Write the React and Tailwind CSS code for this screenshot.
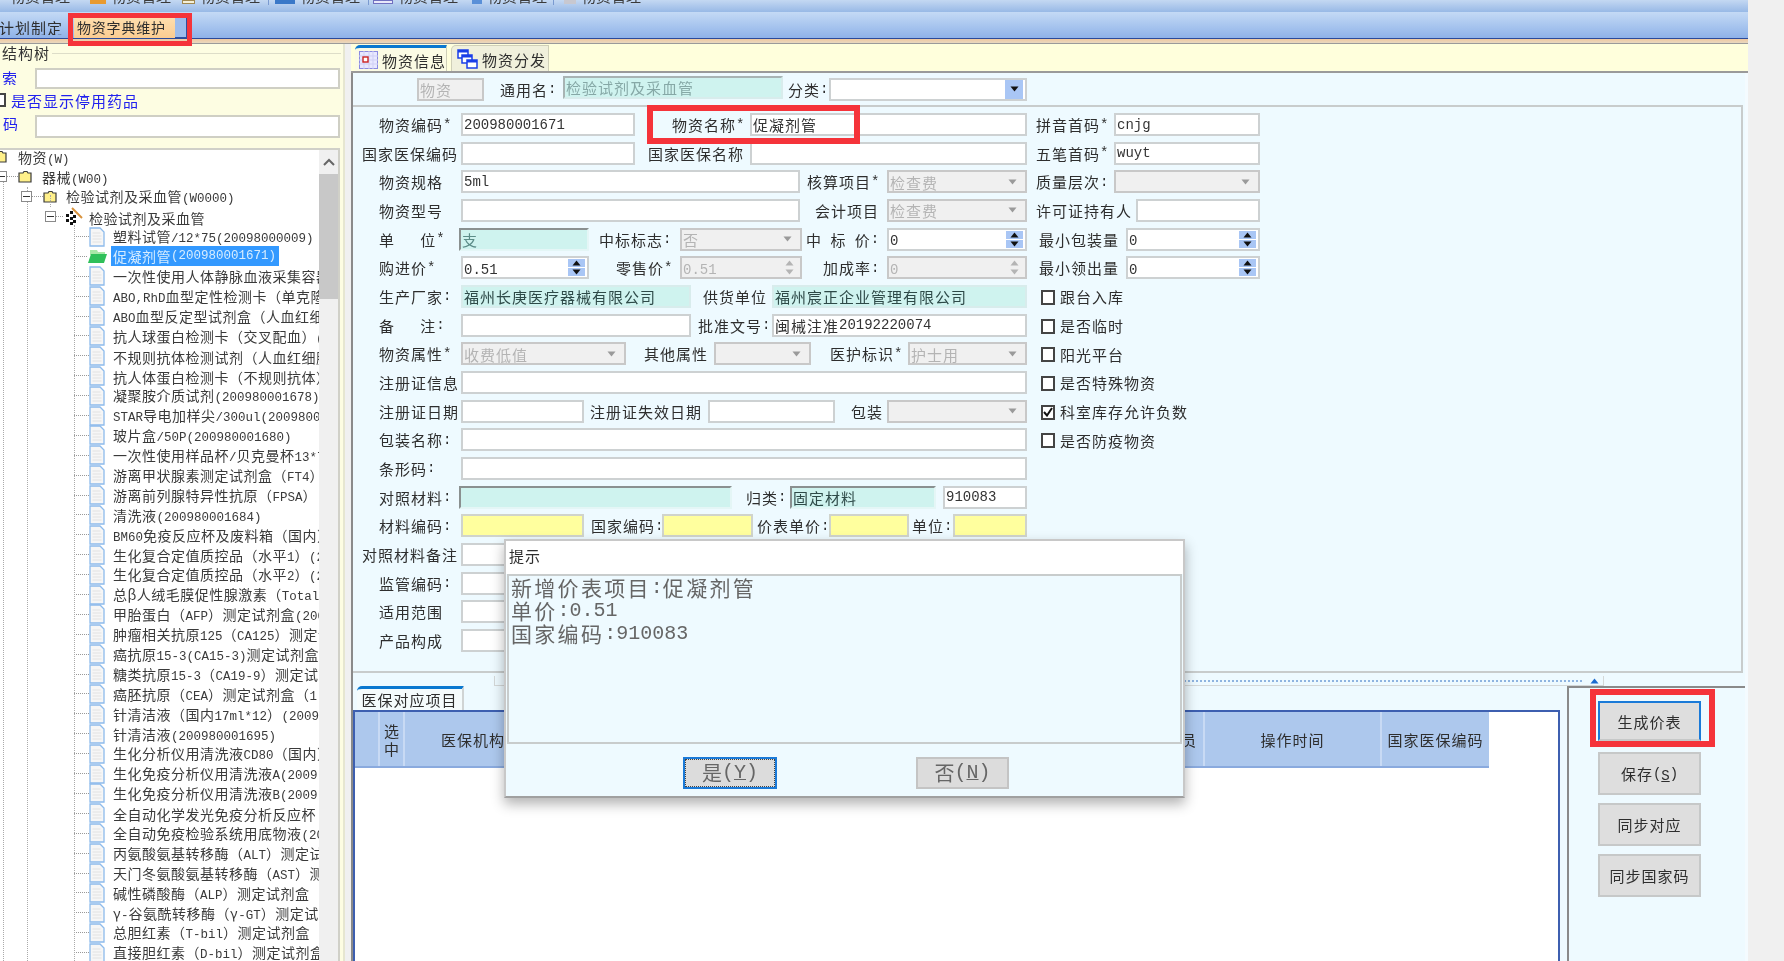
import React from "react";

const VARIANTS = {
  form: ["text-[15px] tracking-[1px]", "font-['Liberation_Mono',monospace] text-[14px]"],
  tree: ["text-[14px] tracking-[0.5px]", "font-['Liberation_Mono',monospace] text-[12.5px]"],
  dlg: ["text-[21px] tracking-[2.3px]", "font-['Liberation_Mono',monospace] text-[20px]"],
  btn: ["text-[20px]", "font-['Liberation_Mono',monospace] text-[20px]"],
};

function T({ t, v = "form" }) {
  const parts = String(t).match(/[\x00-\x7F]+|[^\x00-\x7F]+/g) || [];
  return (
    <>
      {parts.map((p, i) => (
        <span key={i} className={/^[\x00-\x7F]/.test(p) ? VARIANTS[v][1] : VARIANTS[v][0]}>
          {p}
        </span>
      ))}
    </>
  );
}

function L({ c = "", t }) {
  return (
    <div className={`shrink-0 flex items-center whitespace-pre leading-none text-[#2e2e2e] ${c}`}>
      <T t={t} />
    </div>
  );
}

function Inp({ c = "", v = "", k = "white" }) {
  const kinds = {
    white: "bg-white border-2 border-[#cdd1d2] text-[#333]",
    teal: "bg-[#cff3ef] border-2 border-[#d8ecec] text-[#2e4a48]",
    tealD: "bg-[#cff3ef] border-2 border-t-[#8a9090] border-l-[#8a9090] border-r-[#e4f6f6] border-b-[#e4f6f6] text-[#5c8c88]",
    yellow: "bg-[#ffff9e] border-2 border-[#d0d4cc]",
    dis: "bg-[#f0f0f0] border-2 border-[#c8c8c8] text-[#b4b4b4]",
  };
  return (
    <div className={`shrink-0 h-[23px] flex items-center px-[1px] whitespace-pre leading-none overflow-hidden ${kinds[k]} ${c}`}>
      <T t={v} />
    </div>
  );
}

function Tri({ up, c }) {
  return (
    <svg width="9" height="6" viewBox="0 0 9 6" className="block">
      <path d={up ? "M4.5 0.5L8.5 5.5H0.5Z" : "M0.5 0.5H8.5L4.5 5.5Z"} fill={c} />
    </svg>
  );
}

function Sel({ c = "", v = "" }) {
  return (
    <div className={`shrink-0 h-[23px] flex items-center justify-between pl-[1px] pr-[8px] leading-none bg-[#f0f0f0] border-2 border-[#c8c8c8] text-[#b4b4b4] ${c}`}>
      <span className="whitespace-pre"><T t={v} /></span>
      <Tri c="#9a9a9a" />
    </div>
  );
}

function Spin({ c = "", v = "", dis = false }) {
  return (
    <div className={`shrink-0 h-[23px] flex items-center justify-between pl-[1px] pr-[2px] leading-none border-2 ${dis ? "bg-[#f0f0f0] border-[#c8c8c8] text-[#b4b4b4]" : "bg-white border-[#cdd1d2] text-[#333]"} ${c}`}>
      <span><T t={v} /></span>
      <div className="flex flex-col gap-[1px] h-full py-[1px]">
        <div className={`flex-1 w-[17px] flex items-center justify-center ${dis ? "" : "bg-[#a9c6f5]"}`}>
          <Tri up c={dis ? "#b4b4b4" : "#111"} />
        </div>
        <div className={`flex-1 w-[17px] flex items-center justify-center ${dis ? "" : "bg-[#a9c6f5]"}`}>
          <Tri c={dis ? "#b4b4b4" : "#111"} />
        </div>
      </div>
    </div>
  );
}

function Chk({ t, on }) {
  return (
    <div className="shrink-0 flex items-center ml-[14px] leading-none text-[#2e2e2e] whitespace-pre">
      <div className="w-[14px] h-[15px] mt-[2px] border-2 border-[#444] bg-white flex items-center justify-center">
        {on && (
          <svg width="10" height="10" viewBox="0 0 10 10">
            <path d="M1 5l3 3.5L9 1" fill="none" stroke="#111" strokeWidth="2" />
          </svg>
        )}
      </div>
      <span className="ml-[5px]"><T t={t} /></span>
    </div>
  );
}

function Row({ children }) {
  return <div className="flex h-[23px] items-stretch">{children}</div>;
}

function Doc() {
  return (
    <svg width="16" height="20" viewBox="0 0 16 20" className="shrink-0">
      <path d="M1 1h10l4 4v14H1z" fill="#f6f6f6" stroke="#8dbbec" strokeWidth="1.3" />
      <path d="M3.5 6h8M3.5 9h9M3.5 12h9M3.5 15h9" stroke="#e2e2e2" />
    </svg>
  );
}

function Folder() {
  return (
    <svg width="14" height="13" viewBox="0 0 14 13" className="shrink-0">
      <path d="M1 3h4l1-1.5h3L10 3h3v9H1z" fill="#fff08a" stroke="#3a3a3a" strokeWidth="1.2" />
    </svg>
  );
}

function Green() {
  return (
    <svg width="21" height="15" viewBox="0 0 21 15" className="shrink-0">
      <path d="M3 1h7l1 2h7v3H3z" fill="#a8e8a8" />
      <path d="M4 5h16l-3 9H1z" fill="#2fc05a" />
    </svg>
  );
}

function Cat() {
  return (
    <svg width="20" height="20" viewBox="0 0 20 20" className="shrink-0">
      <path d="M9 1l10 10" stroke="#d8923c" strokeWidth="2" />
      <path d="M7 4h3v3H7zM3 7h3v3H3zM10 8h3v3h-3zM7 10h3v3H7zM3 12h3v3H3zM10 13h3v3h-3zM7 15h3v3H7z" fill="#111" />
    </svg>
  );
}

function Plus() {
  return (
    <div className="shrink-0 w-[11px] h-[11px] border border-[#8a8a8a] bg-white flex items-center justify-center">
      <div className="w-[7px] h-[1px] bg-[#333]" />
    </div>
  );
}

function Dots({ c }) {
  return <div className={`shrink-0 border-t border-dotted border-[#999] ${c}`} />;
}

const LEAVES = [
  "塑料试管/12*75(20098000009)",
  "促凝剂管(200980001671)",
  "一次性使用人体静脉血液采集容器(200980001672)",
  "ABO,RhD血型定性检测卡（单克隆抗体）",
  "ABO血型反定型试剂盒（人血红细胞）",
  "抗人球蛋白检测卡（交叉配血）(200980001675)",
  "不规则抗体检测试剂（人血红细胞）",
  "抗人体蛋白检测卡（不规则抗体）",
  "凝聚胺介质试剂(200980001678)",
  "STAR导电加样尖/300ul(200980001679)",
  "玻片盒/50P(200980001680)",
  "一次性使用样品杯/贝克曼杯13*75",
  "游离甲状腺素测定试剂盒（FT4）",
  "游离前列腺特异性抗原（FPSA）(2009",
  "清洗液(200980001684)",
  "BM60免疫反应杯及废料箱（国内）",
  "生化复合定值质控品（水平1）(2009",
  "生化复合定值质控品（水平2）(2009",
  "总β人绒毛膜促性腺激素（Total",
  "甲胎蛋白（AFP）测定试剂盒(2009",
  "肿瘤相关抗原125（CA125）测定试剂盒",
  "癌抗原15-3(CA15-3)测定试剂盒",
  "糖类抗原15-3（CA19-9）测定试剂盒",
  "癌胚抗原（CEA）测定试剂盒（1",
  "针清洁液（国内17ml*12）(2009",
  "针清洁液(200980001695)",
  "生化分析仪用清洗液CD80（国内）",
  "生化免疫分析仪用清洗液A(2009",
  "生化免疫分析仪用清洗液B(2009",
  "全自动化学发光免疫分析反应杯",
  "全自动免疫检验系统用底物液(2009",
  "丙氨酸氨基转移酶（ALT）测定试剂盒",
  "天门冬氨酸氨基转移酶（AST）测定",
  "碱性磷酸酶（ALP）测定试剂盒",
  "γ-谷氨酰转移酶（γ-GT）测定试剂盒",
  "总胆红素（T-bil）测定试剂盒",
  "直接胆红素（D-bil）测定试剂盒",
];

function TreeRow({ children }) {
  return <div className="h-[19.9px] shrink-0 flex items-center whitespace-pre leading-none text-[#3a3a3a]">{children}</div>;
}

function Tree() {
  return (
    <div className="relative w-[319px] h-full overflow-hidden">
      <div className="absolute left-[3px] top-[25px] bottom-0 border-l border-dotted border-[#aaa]" />
      <div className="absolute left-[27px] top-[37px] bottom-0 border-l border-dotted border-[#aaa]" />
      <div className="absolute left-[50px] top-[45px] h-[12px] border-l border-dotted border-[#aaa]" />
      <div className="absolute left-[74px] top-[75px] bottom-0 border-l border-dotted border-[#aaa]" />
      <div className="-mt-[3px] flex flex-col">
        <TreeRow>
          <div className="-ml-[7px]"><Folder /></div>
          <span className="ml-[11px]"><T v="tree" t="物资(W)" /></span>
        </TreeRow>
        <TreeRow>
          <div className="-ml-[4px] relative"><Plus /></div>
          <Dots c="w-[11px]" />
          <Folder />
          <span className="ml-[10px]"><T v="tree" t="器械(W00)" /></span>
        </TreeRow>
        <TreeRow>
          <div className="ml-[21px] relative"><Plus /></div>
          <Dots c="w-[11px]" />
          <Folder />
          <span className="ml-[9px]"><T v="tree" t="检验试剂及采血管(W0000)" /></span>
        </TreeRow>
        <TreeRow>
          <div className="ml-[45px] relative"><Plus /></div>
          <Dots c="w-[7px]" />
          <Cat />
          <span className="ml-[6px]"><T v="tree" t="检验试剂及采血管" /></span>
        </TreeRow>
        {LEAVES.map((t, i) =>
          i === 1 ? (
            <TreeRow key={i}>
              <Dots c="ml-[74px] w-[13px]" />
              <Green />
              <span className="ml-[3px] bg-[#3399ff] text-[#d6ecff] h-[20px] w-[168px] flex items-center pl-[2px]">
                <T v="tree" t={t} />
              </span>
            </TreeRow>
          ) : (
            <TreeRow key={i}>
              <Dots c="ml-[74px] w-[15px]" />
              <Doc />
              <span className="ml-[8px]"><T v="tree" t={t} /></span>
            </TreeRow>
          )
        )}
      </div>
    </div>
  );
}

function LeftPanel() {
  return (
    <div className="w-[345px] shrink-0 h-full flex flex-col bg-[#fdfde2] border-r-2 border-[#e6e6d0]">
      <div className="h-[24px] shrink-0 flex items-start text-[#333]">
        <span className="ml-[2px] bg-[#fdfde2] relative leading-none"><T t="结构树" /></span>
        <div className="flex-1 border-t border-[#ddddc8] mr-[2px] ml-[2px] mt-[9px]" />
      </div>
      <div className="h-[21px] shrink-0 flex items-center">
        <div className="w-[35px] -ml-[14px] -mt-[4px] shrink-0 text-[#2222ee] leading-none whitespace-pre overflow-hidden"><T t="搜索" /></div>
        <div className="ml-[14px] w-[305px] h-[21px] bg-white border-2 border-[#cfcfc4]" />
      </div>
      <div className="h-[26px] shrink-0 flex items-center">
        <div className="-ml-[5px] -mt-[4px] w-[11px] h-[14px] border-2 border-[#444] bg-white shrink-0" />
        <span className="ml-[5px] -mt-[4px] leading-none text-[#2222ee]"><T t="是否显示停用药品" /></span>
      </div>
      <div className="h-[23px] shrink-0 flex items-center">
        <div className="w-[35px] -mt-[6px] shrink-0 overflow-hidden flex justify-end leading-none text-[#2222ee] whitespace-pre pr-[16px]"><T t="码" /></div>
        <div className="w-[305px] h-[23px] bg-white border-2 border-[#cfcfc4]" />
      </div>
      <div className="mt-[10px] w-[340px] flex-1 min-h-0 flex bg-white border-t-2 border-r-2 border-[#d0d0c8] overflow-hidden">
        <Tree />
        <div className="flex-1 bg-[#f0f0f0] flex flex-col">
          <div className="h-[24px] flex items-center justify-center">
            <svg width="12" height="8" viewBox="0 0 12 8"><path d="M1 7l5-5 5 5" fill="none" stroke="#666" strokeWidth="2" /></svg>
          </div>
          <div className="h-[125px] bg-[#c8c8c8]" />
        </div>
      </div>
    </div>
  );
}

function TopTabs() {
  return (
    <div className="h-[27px] shrink-0 flex items-end bg-[#ffffdc] pl-[4px]">
      <div className="w-[92px] h-[26px] bg-[#fbfbe4] border-t-[3px] border-[#0a78d0] border-r border-r-[#cfcfb8] rounded-tl-[5px] flex items-center pl-[4px] leading-none text-[#2e2e2e]">
        <svg width="19" height="18" viewBox="0 0 19 18" className="shrink-0">
          <rect x="0.5" y="0.5" width="18" height="17" fill="#e8e8ff" stroke="#8a8ae0" />
          <path d="M0 5h19M0 9h19M0 13h19M5 0v18M10 0v18M14 0v18" stroke="#cfcff5" />
          <rect x="4" y="6" width="5" height="5" fill="#fff" stroke="#cc2222" strokeWidth="1.4" />
        </svg>
        <span className="ml-[4px]"><T t="物资信息" /></span>
      </div>
      <div className="ml-[4px] w-[98px] h-[26px] bg-[#f0f0dc] border border-[#cfcfb8] border-b-0 rounded-tl-[5px] flex items-center pl-[5px] leading-none text-[#2e2e2e]">
        <svg width="21" height="20" viewBox="0 0 21 20" className="shrink-0">
          <rect x="1" y="1" width="10" height="8" fill="#fff" stroke="#1a3ee8" strokeWidth="1.5" />
          <rect x="1" y="1" width="10" height="2.5" fill="#1a3ee8" />
          <rect x="5" y="6" width="10" height="8" fill="#fff" stroke="#1a3ee8" strokeWidth="1.5" />
          <rect x="5" y="6" width="10" height="2.5" fill="#1a3ee8" />
          <rect x="10" y="11" width="10" height="8" fill="#fff" stroke="#1a3ee8" strokeWidth="1.5" />
          <rect x="10" y="11" width="10" height="2.5" fill="#1a3ee8" />
        </svg>
        <span className="ml-[4px]"><T t="物资分发" /></span>
      </div>
    </div>
  );
}

function TopRow() {
  return (
    <div className="h-[32px] shrink-0 flex items-center">
      <Inp c="ml-[64px] w-[67px]" v="物资" k="dis" />
      <L c="ml-[16px] w-[63px]" t="通用名:" />
      <Inp c="w-[220px] -mt-[4px] !border-t-[#a8b4b4] !border-l-[#a8b4b4] !text-[#86a8a6]" v="检验试剂及采血管" k="teal" />
      <L c="ml-[5px] w-[41px]" t="分类:" />
      <div className="shrink-0 w-[198px] h-[23px] bg-white border-2 border-[#cdd1d2] flex justify-end pr-[2px]">
        <div className="w-[18px] h-full bg-[#a9c6f5] flex items-center justify-center"><Tri c="#111" /></div>
      </div>
    </div>
  );
}

function Form() {
  return (
    <div className="h-[568px] shrink-0 flex flex-col gap-[5.67px] pt-[6px] pl-[1px] border-t-2 border-r-2 border-b-2 border-[#c8cccc] mr-[2px]">
      <Row><L c="w-[107px] pl-[25px]" t="物资编码*" /><Inp c="w-[174px]" v="200980001671" /><L c="w-[115px] pl-[37px]" t="物资名称*" /><Inp c="w-[277px]" v="促凝剂管" /><L c="w-[87px] pl-[9px]" t="拼音首码*" /><Inp c="w-[146px]" v="cnjg" /></Row>
      <Row><L c="w-[107px] pl-[8px]" t="国家医保编码" /><Inp c="w-[174px]" /><L c="w-[115px] pl-[13px]" t="国家医保名称" /><Inp c="w-[277px]" /><L c="w-[87px] pl-[9px]" t="五笔首码*" /><Inp c="w-[146px]" v="wuyt" /></Row>
      <Row><L c="w-[107px] pl-[25px]" t="物资规格" /><Inp c="w-[339px]" v="5ml" /><L c="w-[87px] pl-[7px]" t="核算项目*" /><Sel c="w-[140px]" v="检查费" /><L c="w-[87px] pl-[9px]" t="质量层次:" /><Sel c="w-[146px]" /></Row>
      <Row><L c="w-[107px] pl-[25px]" t="物资型号" /><Inp c="w-[339px]" /><L c="w-[87px] pl-[15px]" t="会计项目" /><Sel c="w-[140px]" v="检查费" /><L c="w-[109px] pl-[9px]" t="许可证持有人" /><Inp c="w-[124px]" /></Row>
      <Row><L c="w-[105px] pl-[25px]" t="单   位*" /><Inp c="w-[130px]" v="支" k="tealD" /><L c="w-[91px] pl-[10px]" t="中标标志:" /><Sel c="w-[122px]" v="否" /><L c="w-[85px] pl-[4px]" t="中 标 价:" /><Spin c="w-[140px]" v="0" /><L c="w-[99px] pl-[12px]" t="最小包装量" /><Spin c="w-[134px]" v="0" /></Row>
      <Row><L c="w-[107px] pl-[25px]" t="购进价*" /><Spin c="w-[128px]" v="0.51" /><L c="w-[91px] pl-[27px]" t="零售价*" /><Spin c="w-[122px]" v="0.51" dis /><L c="w-[85px] pl-[21px]" t="加成率:" /><Spin c="w-[140px]" v="0" dis /><L c="w-[99px] pl-[12px]" t="最小领出量" /><Spin c="w-[134px]" v="0" /></Row>
      <Row><L c="w-[107px] pl-[25px]" t="生产厂家:" /><Inp c="w-[230px]" v="福州长庚医疗器械有限公司" k="teal" /><L c="w-[81px] pl-[12px]" t="供货单位" /><Inp c="w-[255px]" v="福州宸正企业管理有限公司" k="teal" /><Chk t="跟台入库" /></Row>
      <Row><L c="w-[107px] pl-[25px]" t="备   注:" /><Inp c="w-[230px]" /><L c="w-[81px] pl-[7px]" t="批准文号:" /><Inp c="w-[255px]" v="闽械注准20192220074" /><Chk t="是否临时" /></Row>
      <Row><L c="w-[107px] pl-[25px]" t="物资属性*" /><Sel c="w-[165px]" v="收费低值" /><L c="w-[88px] pl-[18px]" t="其他属性" /><Sel c="w-[97px]" /><L c="w-[97px] pl-[19px]" t="医护标识*" /><Sel c="w-[119px]" v="护士用" /><Chk t="阳光平台" /></Row>
      <Row><L c="w-[107px] pl-[25px]" t="注册证信息" /><Inp c="w-[566px]" /><Chk t="是否特殊物资" /></Row>
      <Row><L c="w-[107px] pl-[25px]" t="注册证日期" /><Inp c="w-[123px]" /><L c="w-[124px] pl-[6px]" t="注册证失效日期" /><Inp c="w-[127px]" /><L c="w-[52px] pl-[16px]" t="包装" /><Sel c="w-[140px]" /><Chk t="科室库存允许负数" on /></Row>
      <Row><L c="w-[107px] pl-[25px]" t="包装名称:" /><Inp c="w-[566px]" /><Chk t="是否防疫物资" /></Row>
      <Row><L c="w-[107px] pl-[25px]" t="条形码:" /><Inp c="w-[566px]" /></Row>
      <Row><L c="w-[105px] pl-[25px]" t="对照材料:" /><Inp c="w-[273px]" k="tealD" /><L c="w-[58px] pl-[14px]" t="归类:" /><Inp c="w-[146px] !text-[#2e4a48]" v="固定材料" k="tealD" /><div className="w-[7px] shrink-0" /><Inp c="w-[84px]" v="910083" /></Row>
      <Row><L c="w-[107px] pl-[25px]" t="材料编码:" /><Inp c="w-[123px]" k="yellow" /><L c="w-[78px] pl-[7px]" t="国家编码:" /><Inp c="w-[91px]" k="yellow" /><L c="w-[76px] pl-[4px]" t="价表单价:" /><Inp c="w-[80px]" k="yellow" /><L c="w-[44px] pl-[3px]" t="单位:" /><Inp c="w-[74px]" k="yellow" /></Row>
      <Row><L c="w-[107px] pl-[8px]" t="对照材料备注" /><Inp c="w-[566px]" /></Row>
      <Row><L c="w-[107px] pl-[25px]" t="监管编码:" /><Inp c="w-[566px]" /></Row>
      <Row><L c="w-[107px] pl-[25px]" t="适用范围" /><Inp c="w-[566px]" /></Row>
      <Row><L c="w-[107px] pl-[25px]" t="产品构成" /><Inp c="w-[566px]" /></Row>
    </div>
  );
}

function Splitter() {
  return (
    <div className="h-[13px] shrink-0 flex items-start pt-[3px]">
      <div className="ml-[141px] w-[1110px] h-[10px] border border-[#d4d8d8] border-t-0 flex items-center justify-end pr-[4px]">
        <div className="flex-1 ml-[12px] mr-[8px] border-t-2 border-dotted border-[#8fb4e0]" />
        <svg width="9" height="6" viewBox="0 0 9 6"><path d="M4.5 0.5L8.5 5.5H0.5Z" fill="#1a6ad0" /></svg>
      </div>
    </div>
  );
}

function Grid() {
  return (
    <div className="flex-1 min-w-0 flex flex-col">
      <div className="h-[24px] shrink-0 flex items-end pl-[4px]">
        <div className="w-[107px] h-[24px] bg-[#f4fbfc] border-t-[3px] border-[#0a78d0] border-r-2 border-r-[#d0d4d4] rounded-tl-[5px] flex items-center justify-center leading-none text-[#2e2e2e]">
          <T t="医保对应项目" />
        </div>
      </div>
      <div className="w-[1207px] flex-1 bg-white border-t-2 border-l-2 border-r-2 border-[#3d5fb0]">
        <div className="w-[1134px] h-[56px] flex bg-[#adc8ed] border-b-2 border-[#8aaade] leading-none text-[#2e2e2e]">
          <div className="w-[25px] shrink-0 border-r-2 border-[#c8daf4]" />
          <div className="w-[25px] shrink-0 border-r-2 border-[#c8daf4] flex flex-col items-center justify-center gap-[3px] text-center">
            <span className="text-[15px] leading-[15px]">选</span><span className="text-[15px] leading-[15px]">中</span>
          </div>
          <div className="w-[136px] shrink-0 flex items-center justify-center"><T t="医保机构" /></div>
          <div className="flex-1 flex items-center justify-end pr-[6px] border-r-2 border-[#c8daf4]"><T t="操作员" /></div>
          <div className="w-[177px] shrink-0 flex items-center justify-center border-r-2 border-[#c8daf4]"><T t="操作时间" /></div>
          <div className="w-[107px] shrink-0 flex items-center justify-center"><T t="国家医保编码" /></div>
        </div>
      </div>
    </div>
  );
}

function SideBtn({ t, c = "" }) {
  return (
    <div className={`w-[103px] h-[43px] shrink-0 bg-[#dedede] border-2 flex items-center justify-center leading-none text-[#2e2e2e] whitespace-pre ${c || "border-[#c6c8c8]"}`}>
      {t}
    </div>
  );
}

function SidePanel() {
  return (
    <div className="w-[178px] shrink-0 ml-[2px] h-full border-l-2 border-t-2 border-[#8a8a8a] flex flex-col gap-[8px] pl-[29px] pt-[13px]">
      <SideBtn t={<T t="生成价表" />} c="border-[#1a7ad8] !border-b-[#c6c8c8] !h-[40px] !mb-[3px]" />
      <SideBtn t={<><T t="保存(" /><span className="underline"><T t="S" /></span><T t=")" /></>} />
      <SideBtn t={<T t="同步对应" />} />
      <SideBtn t={<T t="同步国家码" />} />
    </div>
  );
}

function Dialog() {
  return (
    <div className="absolute left-[504px] top-[539px] w-[681px] h-[259px] bg-[#eefaff] border-2 border-[#c8c8c8] border-b-[#a0a0a0] shadow-[0_6px_12px_rgba(0,0,0,0.3)] flex flex-col">
      <div className="h-[33px] shrink-0 bg-white flex items-start pt-[7px] pl-[3px] leading-none text-[#2e2e2e]"><T t="提示" /></div>
      <div className="h-[170px] shrink-0 mx-[1px] border-2 border-[#c8cccc] flex flex-col pl-[2px] text-[#666] whitespace-pre">
        <div className="h-[23px] flex items-center leading-none"><T v="dlg" t="新增价表项目:促凝剂管" /></div>
        <div className="h-[23px] flex items-center leading-none"><T v="dlg" t="单价:0.51" /></div>
        <div className="h-[23px] flex items-center leading-none"><T v="dlg" t="国家编码:910083" /></div>
      </div>
      <div className="flex-1 flex items-start pt-[13px] pl-[177px]">
        <div className="w-[94px] h-[32px] bg-[#dcdcdc] border-2 border-[#1a7ad8] flex items-center justify-center">
          <div className="w-full h-full border border-dotted border-[#444] flex items-center justify-center leading-none text-[#666] whitespace-pre">
            <T v="btn" t="是(" /><span className="underline"><T v="btn" t="Y" /></span><T v="btn" t=")" />
          </div>
        </div>
        <div className="ml-[139px] w-[93px] h-[32px] bg-[#dcdcdc] border-2 border-[#c4c4c4] flex items-center justify-center leading-none text-[#666] whitespace-pre">
          <T v="btn" t="否(" /><span className="underline"><T v="btn" t="N" /></span><T v="btn" t=")" />
        </div>
      </div>
    </div>
  );
}

function ToolItem({ c, icon }) {
  return (
    <div className={`shrink-0 flex items-start h-[5px] overflow-hidden ${c}`}>
      {icon}
      <span className="ml-[5px] block -mt-[12px] text-[15px] leading-[16px] text-[#3a3a3a] whitespace-pre">物资管理</span>
    </div>
  );
}

export default function App() {
  return (
    <div className="relative w-[1784px] h-[961px] overflow-hidden bg-[#f0f0f0] blur-[0.4px] font-['Noto_Sans_CJK_SC','Liberation_Sans',sans-serif]">
      <div className="w-[1748px] h-full flex flex-col">
        <div className="h-[12px] shrink-0 flex items-start bg-gradient-to-b from-[#c4d8f2] to-[#98b9e6] overflow-hidden">
          <ToolItem c="ml-[5px]" icon={<span />} />
          <ToolItem c="ml-[20px]" icon={<div className="w-[16px] h-[4px] bg-[#e89a30]" />} />
          <ToolItem c="ml-[11px]" icon={<div className="w-[13px] h-[4px] bg-[#f4f0d8] border border-[#a08850]" />} />
          <div className="ml-[8px] w-[1px] h-[5px] bg-[#7a9ad0]" />
          <ToolItem c="ml-[6px]" icon={<div className="w-[20px] h-[4px] bg-[#3a78c8]" />} />
          <div className="ml-[8px] w-[1px] h-[5px] bg-[#7a9ad0]" />
          <ToolItem c="ml-[4px]" icon={<div className="w-[20px] h-[4px] bg-[#e8e8fa] border border-[#7070c0]" />} />
          <ToolItem c="ml-[14px]" icon={<div className="w-[10px] h-[4px] bg-[#5a90d8]" />} />
          <div className="ml-[6px] w-[1px] h-[5px] bg-[#7a9ad0]" />
          <ToolItem c="ml-[10px]" icon={<div className="w-[12px] h-[4px] bg-[#c8c8d0]" />} />
        </div>
        <div className="h-[26px] shrink-0 flex items-center bg-gradient-to-b from-[#c4daf5] to-[#8fb2e8]">
          <div className="w-[72px] shrink-0 overflow-hidden flex justify-end pr-[9px] pt-[5px] leading-none text-[#2e2e2e] whitespace-pre text-[14px]">
            <T t="计划制定" />
          </div>
          <div className="w-[101px] h-[23px] mt-[4px] ml-[2px] shrink-0 bg-gradient-to-b from-[#ffe0b0] to-[#fbcb90] flex items-center pl-[3px] leading-none text-[#2e2e2e] whitespace-pre">
            <span className="text-[14px] tracking-[0.8px]">物资字典维护</span>
          </div>
          <div className="w-[13px] h-[23px] mt-[4px] shrink-0 bg-[#9dbcec] border-r-2 border-b-2 border-[#2f4fa0]" />
        </div>
        <div className="h-[1px] shrink-0 bg-[#2b4a9a]" />
        <div className="h-[4px] shrink-0 bg-gradient-to-b from-[#f0c8a0] to-[#e8d8c0]" />
        <div className="h-[1px] shrink-0 bg-[#9a9a9a]" />
        <div className="flex-1 min-h-0 flex">
          <LeftPanel />
          <div className="flex-1 min-w-0 ml-[6px] flex flex-col">
            <TopTabs />
            <div className="h-[2px] shrink-0 bg-[#9a9a9a]" />
            <div className="flex-1 min-h-0 flex flex-col bg-[#eefaff] border-l-2 border-[#8a8a8a] border-r-[3px] border-r-[#f4fbff]">
              <TopRow />
              <Form />
              <Splitter />
              <div className="flex-1 min-h-0 flex">
                <Grid />
                <SidePanel />
              </div>
            </div>
          </div>
        </div>
      </div>
      <Dialog />
      <div className="absolute left-[68px] top-[13px] w-[124px] h-[33px] border-[5px] border-[#f5333a]" />
      <div className="absolute left-[647px] top-[105px] w-[213px] h-[39px] border-[6px] border-[#f5333a]" />
      <div className="absolute left-[1590px] top-[689px] w-[125px] h-[58px] border-[6px] border-[#f5333a]" />
    </div>
  );
}
